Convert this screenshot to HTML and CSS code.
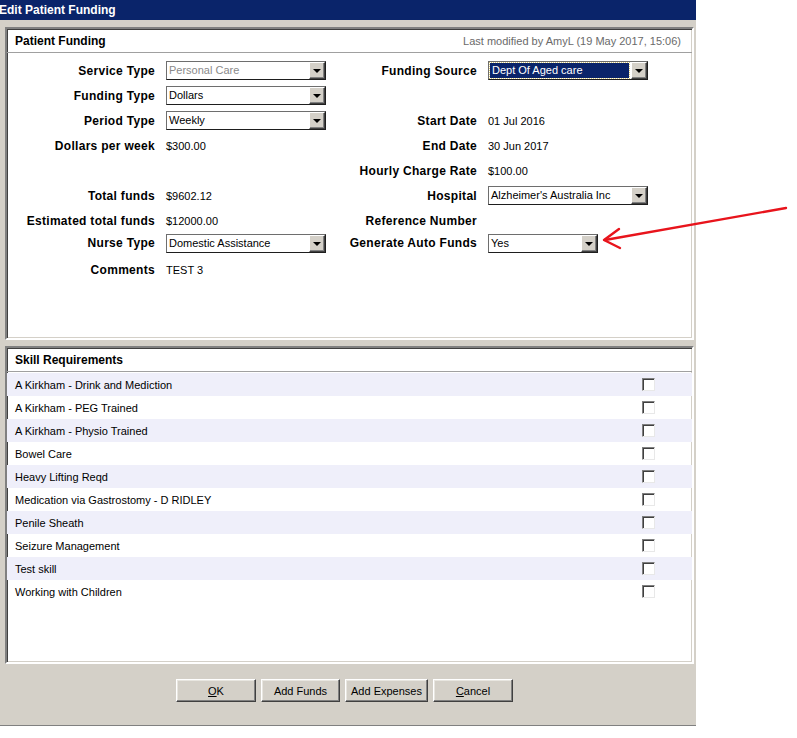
FILE: index.html
```html
<!DOCTYPE html>
<html lang="en">
<head>
    <title>Edit Patient Funding</title>
    <meta charset="UTF-8">
    <link rel="stylesheet" href="styles.css">
</head>
<body>
    <div class="dialog">
        <div class="titlebar">Edit Patient Funding</div>

        <div class="panel funding">
            <div class="panel-head">
                <span class="panel-title">Patient Funding</span>
                <span class="modified">Last modified by AmyL (19 May 2017, 15:06)</span>
            </div>

            <div class="form-grid">
                <div class="label">Service Type</div>
                <div class="field"><div class="combo disabled"><span class="combo-text">Personal Care</span><span class="drop"></span></div></div>
                <div class="label">Funding Source</div>
                <div class="field"><div class="combo"><span class="combo-text selected">Dept Of Aged care</span><span class="drop"></span></div></div>

                <div class="label">Funding Type</div>
                <div class="field"><div class="combo"><span class="combo-text">Dollars</span><span class="drop"></span></div></div>
                <div class="label"></div>
                <div class="field"></div>

                <div class="label">Period Type</div>
                <div class="field"><div class="combo"><span class="combo-text">Weekly</span><span class="drop"></span></div></div>
                <div class="label">Start Date</div>
                <div class="field">01 Jul 2016</div>

                <div class="label">Dollars per week</div>
                <div class="field">$300.00</div>
                <div class="label">End Date</div>
                <div class="field">30 Jun 2017</div>

                <div class="label"></div>
                <div class="field"></div>
                <div class="label">Hourly Charge Rate</div>
                <div class="field">$100.00</div>

                <div class="label">Total funds</div>
                <div class="field">$9602.12</div>
                <div class="label">Hospital</div>
                <div class="field"><div class="combo"><span class="combo-text">Alzheimer's Australia Inc</span><span class="drop"></span></div></div>

                <div class="label">Estimated total funds</div>
                <div class="field">$12000.00</div>
                <div class="label">Reference Number</div>
                <div class="field"></div>

                <div class="label">Nurse Type</div>
                <div class="field"><div class="combo"><span class="combo-text">Domestic Assistance</span><span class="drop"></span></div></div>
                <div class="label">Generate Auto Funds</div>
                <div class="field"><div class="combo short"><span class="combo-text">Yes</span><span class="drop"></span></div></div>

                <div class="label">Comments</div>
                <div class="field">TEST 3</div>
                <div class="label"></div>
                <div class="field"></div>
            </div>
        </div>

        <div class="panel skills">
            <div class="panel-head">
                <span class="panel-title">Skill Requirements</span>
            </div>
            <ul class="skill-list">
                <li class="skill-row"><span>A Kirkham - Drink and Mediction</span><span class="checkbox"></span></li>
                <li class="skill-row"><span>A Kirkham - PEG Trained</span><span class="checkbox"></span></li>
                <li class="skill-row"><span>A Kirkham - Physio Trained</span><span class="checkbox"></span></li>
                <li class="skill-row"><span>Bowel Care</span><span class="checkbox"></span></li>
                <li class="skill-row"><span>Heavy Lifting Reqd</span><span class="checkbox"></span></li>
                <li class="skill-row"><span>Medication via Gastrostomy - D RIDLEY</span><span class="checkbox"></span></li>
                <li class="skill-row"><span>Penile Sheath</span><span class="checkbox"></span></li>
                <li class="skill-row"><span>Seizure Management</span><span class="checkbox"></span></li>
                <li class="skill-row"><span>Test skill</span><span class="checkbox"></span></li>
                <li class="skill-row"><span>Working with Children</span><span class="checkbox"></span></li>
            </ul>
        </div>

        <div class="button-bar">
            <button class="btn btn-ok"><u>O</u>K</button>
            <button class="btn btn-funds">Add Funds</button>
            <button class="btn btn-expenses">Add Expenses</button>
            <button class="btn btn-cancel"><u>C</u>ancel</button>
        </div>
    </div>

    <!-- annotation pointing at the auto funds option -->
    <svg class="annotation" width="797" height="738" viewBox="0 0 797 738">
        <line x1="786" y1="208" x2="605" y2="240" stroke="#e8141c" stroke-width="2.4" stroke-linecap="round"/>
        <polyline points="619,229 604,240 620,248" fill="none" stroke="#e8141c" stroke-width="2.4" stroke-linecap="round" stroke-linejoin="round"/>
    </svg>
</body>
</html>
```

FILE: styles.css
```css
body {
    margin: 0;
    padding: 0;
    background: #fff;
    font-family: "Liberation Sans", Arial, sans-serif;
    font-size: 11px;
    color: #000;
}

.dialog {
    width: 696px;
    height: 726px;
    box-sizing: border-box;
    background: #d4d0c8;
    border-bottom: 1px solid #808080;
    display: flex;
    flex-direction: column;
}

.titlebar {
    height: 20px;
    line-height: 20px;
    background: #0a246a;
    color: #fff;
    font-size: 12px;
    font-weight: bold;
    text-indent: -1px;
}

.panel {
    background: #fff;
    margin: 0 2px 0 5px;
    box-sizing: border-box;
    border: 2px solid;
    border-color: #808080 #fff #fff #808080;
    box-shadow: inset 1px 1px #404040, inset -1px -1px #d4d0c8;
}

.funding {
    margin-top: 7px;
    height: 313px;
}

.skills {
    margin-top: 6px;
    height: 318px;
}

.panel-head {
    height: 23px;
    display: flex;
    justify-content: space-between;
    align-items: center;
    padding: 0 11px 0 8px;
    border-bottom: 1px solid #a0a0a0;
}

.panel-title {
    font-size: 12px;
    font-weight: bold;
}

.modified {
    color: #6a6a6a;
}

.form-grid {
    display: grid;
    grid-template-columns: 148px 160px 140px 160px;
    grid-template-rows: repeat(7, 25px) 20px 34px;
    column-gap: 11px;
    padding: 5px 0 0 0;
}

.label {
    font-size: 12px;
    font-weight: bold;
    letter-spacing: 0.3px;
    white-space: nowrap;
    display: flex;
    align-items: center;
    justify-content: flex-end;
}

.field {
    display: flex;
    align-items: center;
    white-space: nowrap;
}

.combo {
    width: 160px;
    height: 19px;
    box-sizing: border-box;
    display: flex;
    border: 1px solid #1e1e1e;
    border-top-color: #6e6e6e;
    border-left-color: #6e6e6e;
    background: #fff;
}

.combo.short {
    width: 110px;
}

.combo-text {
    flex: 1;
    padding-left: 2px;
    line-height: 17px;
    overflow: hidden;
}

.combo.disabled .combo-text {
    color: #8a8a8a;
}

.combo-text.selected {
    background: #0a246a;
    color: #fff;
    margin: 1px 2px 1px 1px;
    line-height: 15px;
    outline: 1px dotted #d8c878;
}

.drop {
    width: 16px;
    box-sizing: border-box;
    background: #d4d0c8;
    border: 1px solid;
    border-color: #fff #404040 #404040 #fff;
    box-shadow: inset -1px -1px #808080;
    display: flex;
    align-items: center;
    justify-content: center;
}

.drop::after {
    content: "";
    width: 0;
    height: 0;
    border-left: 4px solid transparent;
    border-right: 4px solid transparent;
    border-top: 4px solid #000;
    margin-top: 1px;
}

.skill-list {
    list-style: none;
    margin: 0;
    padding: 1px 0 0 0;
}

.skill-row {
    height: 23px;
    display: flex;
    align-items: center;
    justify-content: space-between;
    padding: 0 37px 0 8px;
}

.skill-row:nth-child(odd) {
    background: #efeffa;
}

.checkbox {
    width: 13px;
    height: 13px;
    box-sizing: border-box;
    background: #fff;
    border: 1px solid;
    border-color: #808080 #e8e8e8 #e8e8e8 #808080;
    box-shadow: inset 1px 1px #404040;
}

.button-bar {
    flex: 1;
    display: flex;
    justify-content: center;
    align-items: flex-start;
    gap: 5px;
    padding: 15px 7px 0 0;
}

.btn {
    height: 23px;
    box-sizing: border-box;
    background: #d4d0c8;
    font-family: "Liberation Sans", Arial, sans-serif;
    font-size: 11px;
    color: #000;
    border: 1px solid;
    border-color: #fff #404040 #404040 #fff;
    box-shadow: inset -1px -1px #808080, inset 1px 1px #e8e6e0;
    padding: 0;
}

.btn-ok { width: 80px; }
.btn-funds { width: 79px; }
.btn-expenses { width: 83px; }
.btn-cancel { width: 80px; }

.annotation {
    position: absolute;
    left: 0;
    top: 0;
    pointer-events: none;
}
```
